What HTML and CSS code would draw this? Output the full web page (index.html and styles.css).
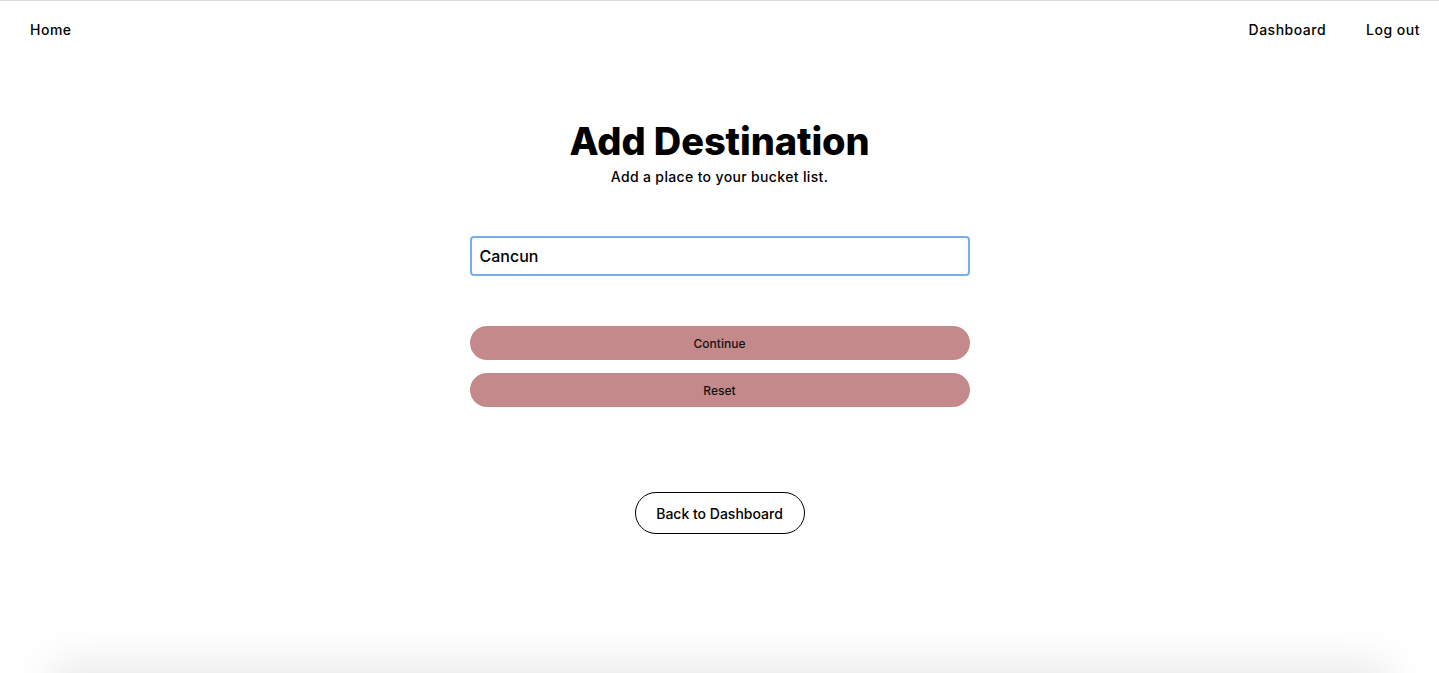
FILE: index.html
```html
<!DOCTYPE html>
<html lang="en">
<head>
<meta charset="utf-8">
<title>Add Destination</title>
<link rel="stylesheet" href="styles.css">
</head>
<body>
<div class="page">
  <nav class="nav">
    <a class="nav-link" href="#">Home</a>
    <div class="nav-right">
      <a class="nav-link" href="#">Dashboard</a>
      <a class="nav-link" href="#">Log out</a>
    </div>
  </nav>
  <main class="main">
    <h1 class="title">Add Destination</h1>
    <p class="subtitle">Add a place to your bucket list.</p>
    <form class="form">
      <input class="input" type="text" value="Cancun">
      <div class="actions">
        <button class="btn" type="button">Continue</button>
        <button class="btn" type="button">Reset</button>
      </div>
    </form>
    <a class="back" href="#">Back to Dashboard</a>
  </main>
  <div class="below"></div>
</div>
</body>
</html>
```
FILE: styles.css
```css
html, body {
  margin: 0;
  padding: 0;
  background: #fff;
}
body {
  font-family: "Inter", "Open Sans", sans-serif;
  color: #000;
  border-top: 1px solid #dcdcdc;
}
.page {
  display: flex;
  flex-direction: column;
}
.nav {
  display: flex;
  justify-content: space-between;
  align-items: center;
  height: 56px;
  padding: 0 19px 0 30px;
}
.nav-right {
  display: flex;
  gap: 40px;
}
.nav-link {
  color: #000;
  text-decoration: none;
  font-size: 14px;
  font-weight: 500;
  letter-spacing: 0.5px;
}
.main {
  display: flex;
  flex-direction: column;
  align-items: center;
}
.title {
  margin: 63px 0 0;
  font-size: 38px;
  font-weight: 800;
  line-height: 42px;
  letter-spacing: -0.1px;
}
.subtitle {
  margin: 6px 0 0;
  font-size: 14px;
  font-weight: 500;
  line-height: 18px;
  letter-spacing: 0.35px;
}
.form {
  display: flex;
  flex-direction: column;
  width: 500px;
  margin-top: 50px;
}
.input {
  box-sizing: border-box;
  width: 100%;
  height: 40px;
  border: 2px solid #78aeea;
  border-radius: 4px;
  padding: 0 8px;
  font-family: inherit;
  font-size: 16px;
  font-weight: 500;
  color: #000;
  outline: none;
}
.actions {
  display: flex;
  flex-direction: column;
  gap: 13px;
  margin-top: 50px;
}
.btn {
  height: 34px;
  border: none;
  border-radius: 17px;
  background: #c4898b;
  font-family: inherit;
  font-size: 12px;
  font-weight: 500;
  color: #111;
}
.back {
  box-sizing: border-box;
  display: flex;
  align-items: center;
  justify-content: center;
  margin-top: 85px;
  width: 170px;
  height: 42px;
  border: 1px solid #000;
  border-radius: 21px;
  color: #000;
  text-decoration: none;
  font-size: 14px;
  font-weight: 500;
}
.below {
  margin: 139px 60px 0;
  height: 200px;
  background: #fff;
  box-shadow: 0 0 40px 10px rgba(0, 0, 0, 0.09);
}
```
